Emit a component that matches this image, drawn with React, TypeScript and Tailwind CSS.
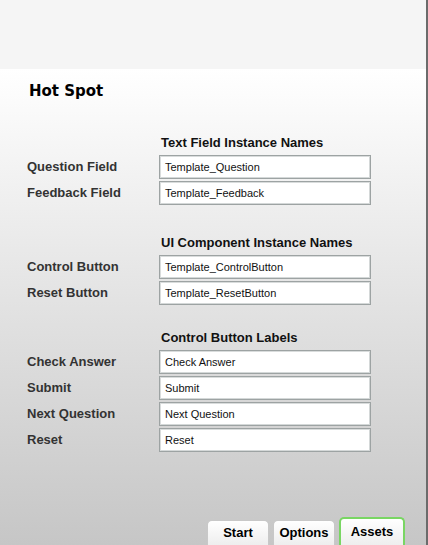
const sections = [
  {
    title: "Text Field Instance Names",
    rows: [
      { label: "Question Field", value: "Template_Question" },
      { label: "Feedback Field", value: "Template_Feedback" },
    ],
  },
  {
    title: "UI Component Instance Names",
    rows: [
      { label: "Control Button", value: "Template_ControlButton" },
      { label: "Reset Button", value: "Template_ResetButton" },
    ],
  },
  {
    title: "Control Button Labels",
    rows: [
      { label: "Check Answer", value: "Check Answer" },
      { label: "Submit", value: "Submit" },
      { label: "Next Question", value: "Next Question" },
      { label: "Reset", value: "Reset" },
    ],
  },
];

const sectionGaps = ["mt-[35px]", "mt-[30px]", "mt-[25px]"];

const tabs = ["Start", "Options", "Assets"];

export default function App() {
  return (
    <div className="w-[428px] h-[545px] overflow-hidden flex flex-col border-r-2 border-[#6b6b6b] font-['Liberation_Sans',Arial,sans-serif]">
      <div className="h-[69px] shrink-0 bg-[#f5f5f5]" />
      <div className="flex-1 flex flex-col bg-gradient-to-b from-white to-[#c6c6c6]">
        <h1 className="ml-[29px] mt-[13px] text-[15px] leading-[18px] font-bold text-black font-['DejaVu_Sans',Verdana,sans-serif]">
          Hot Spot
        </h1>

        {sections.map((section, i) => (
          <div key={section.title} className={sectionGaps[i]}>
            <div className="ml-[161px] text-[13px] leading-[16px] font-bold text-[#111] mb-[4px]">
              {section.title}
            </div>
            <div className="flex flex-col gap-[2px]">
              {section.rows.map((row) => (
                <div key={row.label} className="flex items-center h-[24px]">
                  <div className="w-[159px] pl-[27px] text-[13px] font-bold text-[#333]">
                    {row.label}
                  </div>
                  <div className="w-[212px] h-[24px] flex items-center bg-white border border-[#9da3a3] shadow-[inset_1px_1px_0_#d9dcdc,inset_-1px_-1px_0_#d4d8d8] pl-[5px] text-[11px] text-[#111]">
                    {row.value}
                  </div>
                </div>
              ))}
            </div>
          </div>
        ))}

        <div className="mt-auto flex gap-[4px] pl-[207px]">
          {tabs.map((tab) => {
            const active = tab === "Assets";
            return (
              <div
                key={tab}
                className={
                  active
                    ? "w-[66px] h-[28px] -mt-[3px] rounded-t-[5px] border-2 border-b-0 border-[#79d663] bg-gradient-to-b from-white to-[#eeeeee] flex justify-center pt-[3px] text-[13px] font-bold text-black"
                    : "w-[62px] h-[25px] rounded-t-[5px] border border-b-0 border-[#c8c8c8] bg-gradient-to-b from-white to-[#eeeeee] flex justify-center pt-[2px] text-[13px] font-bold text-black"
                }
              >
                {tab}
              </div>
            );
          })}
        </div>
      </div>
    </div>
  );
}
